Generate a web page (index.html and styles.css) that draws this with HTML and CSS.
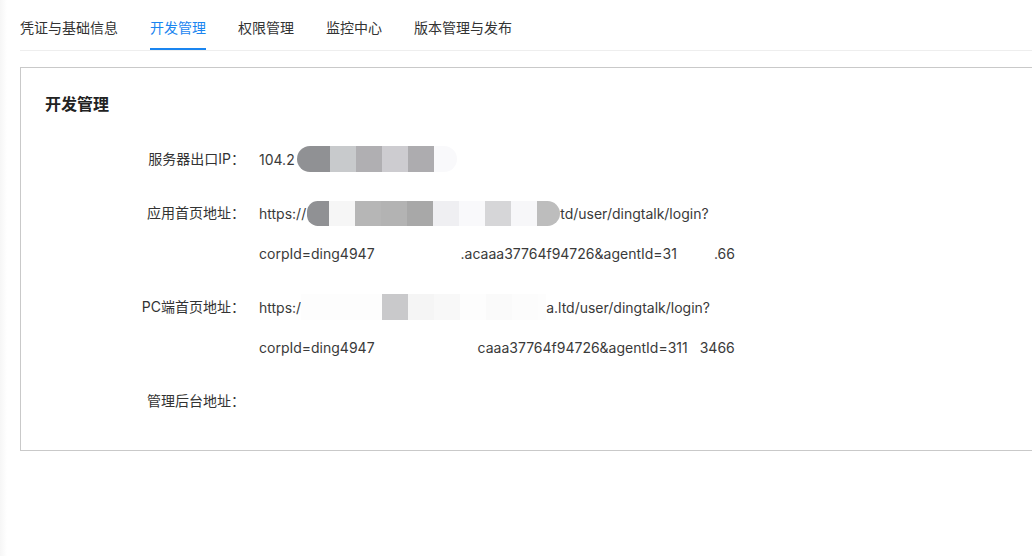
FILE: index.html
```html
<!DOCTYPE html>
<html lang="zh-CN">
<head>
  <meta charset="UTF-8" />
  <title>开发管理</title>
  <link rel="stylesheet" href="styles.css">
</head>
<body>
  <div class="page">
    <div class="tabs">
      <a class="tab">凭证与基础信息</a>
      <a class="tab active">开发管理</a>
      <a class="tab">权限管理</a>
      <a class="tab">监控中心</a>
      <a class="tab">版本管理与发布</a>
    </div>

    <div class="card">
      <h3 class="card-title">开发管理</h3>

      <div class="form">
        <div class="item">
          <label>服务器出口IP：</label>
          <div class="value">
            <div class="line">104.2<span class="mask ip">
              <i class="s1"></i><i class="s2"></i><i class="s3"></i><i class="s4"></i><i class="s5"></i><i class="s6"></i>
            </span></div>
          </div>
        </div>

        <div class="item">
          <label>应用首页地址：</label>
          <div class="value">
            <div class="line">https://<span class="mask url">
              <i class="s1 first"></i><i class="s7"></i><i class="s8"></i><i class="s9"></i><i class="s10"></i><i class="s11"></i><i class="s6"></i><i class="s12"></i><i class="s13"></i><i class="s14 last"></i>
            </span>td/user/dingtalk/login?</div>
            <div class="line">corpId=ding4947<span class="gap g1"></span>.acaaa37764f94726&amp;agentId=31<span class="gap g2"></span>.66</div>
          </div>
        </div>

        <div class="item">
          <label>PC端首页地址：</label>
          <div class="value">
            <div class="line">https:/<span class="mask pale">
              <i class="w"></i><i class="w"></i><i class="w"></i><i class="s15"></i><i class="s16"></i><i class="s17"></i><i class="w"></i><i class="s18"></i><i class="s19"></i><i class="w tail"></i>
            </span>a.ltd/user/dingtalk/login?</div>
            <div class="line">corpId=ding4947<span class="gap g3"></span>caaa37764f94726&amp;agentId=311<span class="gap g4"></span>3466</div>
          </div>
        </div>

        <div class="item">
          <label>管理后台地址：</label>
          <div class="value">
            <div class="line"></div>
          </div>
        </div>
      </div>
    </div>
  </div>
</body>
</html>
```

FILE: styles.css
```css
html, body {
  margin: 0;
  padding: 0;
}
body {
  background: linear-gradient(to right, #f6f6f6 0, #fff 7px);
  color: #333;
  font-family: Inter, "Noto Sans CJK SC", sans-serif;
  font-size: 14px;
  width: 1032px;
  height: 556px;
  overflow: hidden;
}
.page {
  padding-left: 20px;
}

/* tab bar */
.tabs {
  display: flex;
  gap: 32px;
  height: 50px;
  border-bottom: 1px solid #eeeeee;
  margin-right: -40px;
}
.tab {
  box-sizing: border-box;
  height: 50px;
  padding-top: 17px;
  line-height: 22px;
  color: #333;
  cursor: pointer;
}
.tab.active {
  color: #1a85f0;
  border-bottom: 2px solid #1a85f0;
}

/* card */
.card {
  margin-top: 16px;
  margin-right: -40px;
  border: 1px solid #c9c9c9;
  padding: 24px 24px 29px;
}
.card-title {
  margin: 0;
  font-size: 16px;
  font-weight: 600;
  line-height: 24px;
  color: #222;
}
.form {
  margin-top: 23px;
}
.item {
  display: flex;
  margin-bottom: 14px;
}
.item:last-child {
  margin-bottom: 0;
}
.item label {
  width: 200px;
  text-align: right;
  line-height: 40px;
  color: #333;
}
.value {
  margin-left: 14px;
}
.line {
  height: 40px;
  display: flex;
  align-items: center;
  white-space: nowrap;
  color: #3a3a3a;
}

/* pixelated redaction */
.mask {
  display: inline-flex;
  height: 26px;
  overflow: hidden;
}
.mask i {
  width: 26px;
  height: 100%;
}
.mask.ip {
  margin-left: 2px;
  border-radius: 13px;
}
.mask.ip i:first-child {
  width: 33px;
}
.mask.ip i:last-child {
  width: 23px;
}
.mask.url {
  margin-left: 1px;
  height: 25px;
  border-radius: 12px 14px 14px 12px;
}
.mask.url .first {
  width: 22px;
}
.mask.url .last {
  width: 23px;
}
.mask.pale i:first-child {
  width: 29px;
}
.mask.pale .tail {
  width: 8px;
}

.s1 { background: #909194; }
.s2 { background: #c8cacc; }
.s3 { background: #b0afb2; }
.s4 { background: #cdccd0; }
.s5 { background: #adacaf; }
.s6 { background: #f9f9fb; }
.s7 { background: #f6f6f6; }
.s8 { background: #b6b6b6; }
.s9 { background: #b3b3b3; }
.s10 { background: #a8a8a8; }
.s11 { background: #efeff2; }
.s12 { background: #d6d6d8; }
.s13 { background: #f7f7f9; }
.s14 { background: #bdbdbd; }
.s15 { background: #c9c9cb; }
.s16 { background: #f5f5f5; }
.s17 { background: #f8f8f8; }
.s18 { background: #fafafa; }
.s19 { background: #fcfcfc; }
.w { background: #fdfdfd; }

.gap {
  display: inline-block;
}
.g1 { width: 86px; }
.g2 { width: 37px; }
.g3 { width: 103px; }
.g4 { width: 12px; }
```
